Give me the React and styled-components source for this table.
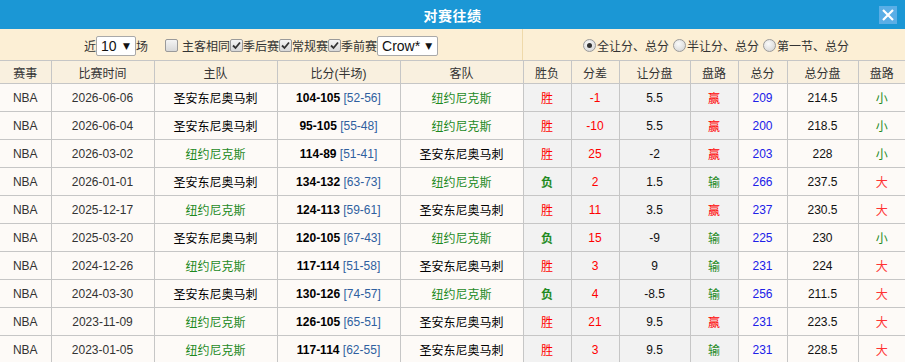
import React from "react";
import styled, { createGlobalStyle } from "styled-components";

const GlobalStyle = createGlobalStyle`
  body {
    margin: 0;
    background: #fff;
    font-family: "Liberation Sans", "Noto Sans CJK SC", sans-serif;
    font-size: 12px;
  }
`;

const Panel = styled.div`
  width: 905px;
  overflow: hidden;
`;

const TitleBar = styled.div`
  height: 29px;
  background: #1b97d5;
  display: grid;
  grid-template-columns: 1fr auto 1fr;
  align-items: center;
`;

const Title = styled.div`
  grid-column: 2;
  color: #fff;
  font-weight: bold;
  font-size: 14px;
  letter-spacing: 0.5px;
`;

const CloseButton = styled.div`
  grid-column: 3;
  justify-self: end;
  margin-right: 8px;
  width: 18px;
  height: 18px;
  background: #5aaee6;
  display: flex;
  align-items: center;
  justify-content: center;
`;

const FilterRow = styled.div`
  height: 31px;
  background: #fcefd5;
  display: grid;
  grid-template-columns: 523px 1fr;
`;

const FilterCell = styled.div`
  display: flex;
  align-items: center;
  justify-content: center;
  color: #333;
  border-right: ${(p) => (p.divider ? "1px solid #efd9aa" : "none")};
  padding-top: 2px;
`;

const Label = styled.span`
  margin: ${(p) => p.m || "0"};
`;

const FakeSelect = styled.div`
  width: ${(p) => p.w}px;
  height: 20px;
  box-sizing: border-box;
  background: #fff;
  border: 1px solid #a9a9a9;
  border-radius: 2px;
  display: flex;
  align-items: center;
  justify-content: space-between;
  padding: 0 5px 0 4px;
  font-size: 14px;
  color: #111;
  font-family: "Liberation Sans", sans-serif;

  span.arrow {
    font-size: 9px;
    font-family: "DejaVu Sans", sans-serif;
  }
`;

const Box = styled.span`
  width: 11px;
  height: 11px;
  border: 1px solid #9a9a9a;
  border-radius: 2px;
  background: linear-gradient(#f4f4f4, #d8d8d8);
  display: inline-flex;
  align-items: center;
  justify-content: center;
  margin: ${(p) => p.m || "0"};
`;

const Radio = styled.span`
  width: 11px;
  height: 11px;
  border: 1px solid #9a9a9a;
  border-radius: 50%;
  background: radial-gradient(circle at 40% 35%, #fafafa, #d0d0d0);
  display: inline-flex;
  align-items: center;
  justify-content: center;
  margin: 0 1px 0 4px;

  &::after {
    content: "";
    width: 5px;
    height: 5px;
    border-radius: 50%;
    background: ${(p) => (p.on ? "#333" : "transparent")};
  }
`;

const Table = styled.table`
  width: 905px;
  border-collapse: collapse;
  table-layout: fixed;
  border-top: 1px solid #c6c6c6;
`;

const Th = styled.th`
  height: 22px;
  padding: 0;
  background: #f9f0df;
  border-right: 1px solid #c6c6c6;
  border-bottom: 1px solid #c6c6c6;
  font-weight: normal;
  color: #333;
  text-align: center;
  &:last-child {
    border-right: none;
  }
`;

const Td = styled.td`
  height: 27px;
  padding: 0;
  text-align: center;
  background: ${(p) => (p.grey ? "#f2f2f2" : "#fdfaf7")};
  border-right: 1px solid #c6c6c6;
  border-bottom: 1px solid #c6c6c6;
  color: ${(p) => p.color || "#333"};
  font-weight: ${(p) => (p.bold ? "bold" : "normal")};
  white-space: nowrap;
  &:last-child {
    border-right: none;
  }
`;

const Score = styled.b`
  color: #000;
`;

const Half = styled.span`
  color: #2f5f9f;
`;

const widths = [51, 103, 123, 123, 123, 48, 48, 71, 48, 49, 71, 47];
const heads = ["赛事", "比赛时间", "主队", "比分(半场)", "客队", "胜负", "分差", "让分盘", "盘路", "总分", "总分盘", "盘路"];

const SPURS = "圣安东尼奥马刺";
const KNICKS = "纽约尼克斯";

const rows = [
  ["2026-06-06", SPURS, "104-105", "52-56", "胜", "-1", "5.5", "赢", 209, "214.5", "小"],
  ["2026-06-04", SPURS, "95-105", "55-48", "胜", "-10", "5.5", "赢", 200, "218.5", "小"],
  ["2026-03-02", KNICKS, "114-89", "51-41", "胜", "25", "-2", "赢", 203, "228", "小"],
  ["2026-01-01", SPURS, "134-132", "63-73", "负", "2", "1.5", "输", 266, "237.5", "大"],
  ["2025-12-17", KNICKS, "124-113", "59-61", "胜", "11", "3.5", "赢", 237, "230.5", "大"],
  ["2025-03-20", SPURS, "120-105", "67-43", "负", "15", "-9", "输", 225, "230", "小"],
  ["2024-12-26", KNICKS, "117-114", "51-58", "胜", "3", "9", "输", 231, "224", "大"],
  ["2024-03-30", SPURS, "130-126", "74-57", "负", "4", "-8.5", "输", 256, "211.5", "大"],
  ["2023-11-09", KNICKS, "126-105", "65-51", "胜", "21", "9.5", "赢", 231, "223.5", "大"],
  ["2023-01-05", KNICKS, "117-114", "62-55", "胜", "3", "9.5", "输", 231, "228.5", "大"],
];

const RED = "#f00";
const GREEN = "#1f8a1f";
const teamColor = (t) => (t === KNICKS ? GREEN : "#000");

function Check() {
  return (
    <svg width="9" height="9" viewBox="0 0 9 9">
      <path d="M1 4.5 L3.5 7 L8 1.5" fill="none" stroke="#333" strokeWidth="1.8" />
    </svg>
  );
}

export default function App() {
  return (
    <Panel>
      <GlobalStyle />
      <TitleBar>
        <Title>对赛往绩</Title>
        <CloseButton>
          <svg width="14" height="14" viewBox="0 0 14 14">
            <path d="M2 2 L12 12 M12 2 L2 12" stroke="#fff" strokeWidth="2.2" />
          </svg>
        </CloseButton>
      </TitleBar>
      <FilterRow>
        <FilterCell divider>
          <Label>近</Label>
          <FakeSelect w={40}>
            10<span className="arrow">▼</span>
          </FakeSelect>
          <Label>场</Label>
          <Box m="0 4px 0 17px" />
          <Label>主客相同</Label>
          <Box><Check /></Box>
          <Label>季后赛</Label>
          <Box><Check /></Box>
          <Label>常规赛</Label>
          <Box><Check /></Box>
          <Label>季前赛</Label>
          <FakeSelect w={61}>
            Crow*<span className="arrow">▼</span>
          </FakeSelect>
        </FilterCell>
        <FilterCell>
          <Radio on />
          <Label>全让分、总分</Label>
          <Radio />
          <Label>半让分、总分</Label>
          <Radio />
          <Label>第一节、总分</Label>
        </FilterCell>
      </FilterRow>
      <Table>
        <colgroup>
          {widths.map((w, i) => (
            <col key={i} style={{ width: w }} />
          ))}
        </colgroup>
        <thead>
          <tr>
            {heads.map((h, i) => (
              <Th key={i}>{h}</Th>
            ))}
          </tr>
        </thead>
        <tbody>
          {rows.map((r) => {
            const [date, home, score, half, res, diff, line, cover, total, tline, ou] = r;
            const away = home === SPURS ? KNICKS : SPURS;
            return (
              <tr key={date}>
                <Td>NBA</Td>
                <Td>{date}</Td>
                <Td color={teamColor(home)}>{home}</Td>
                <Td>
                  <Score>{score}</Score> <Half>[{half}]</Half>
                </Td>
                <Td color={teamColor(away)}>{away}</Td>
                <Td grey color={res === "胜" ? RED : GREEN} bold={res === "负"}>
                  {res}
                </Td>
                <Td grey color={RED}>{diff}</Td>
                <Td grey color="#111">{line}</Td>
                <Td grey color={cover === "赢" ? RED : GREEN}>{cover}</Td>
                <Td color="#2020e8">{total}</Td>
                <Td color="#111">{tline}</Td>
                <Td color={ou === "大" ? "#f33" : GREEN}>{ou}</Td>
              </tr>
            );
          })}
        </tbody>
      </Table>
    </Panel>
  );
}
